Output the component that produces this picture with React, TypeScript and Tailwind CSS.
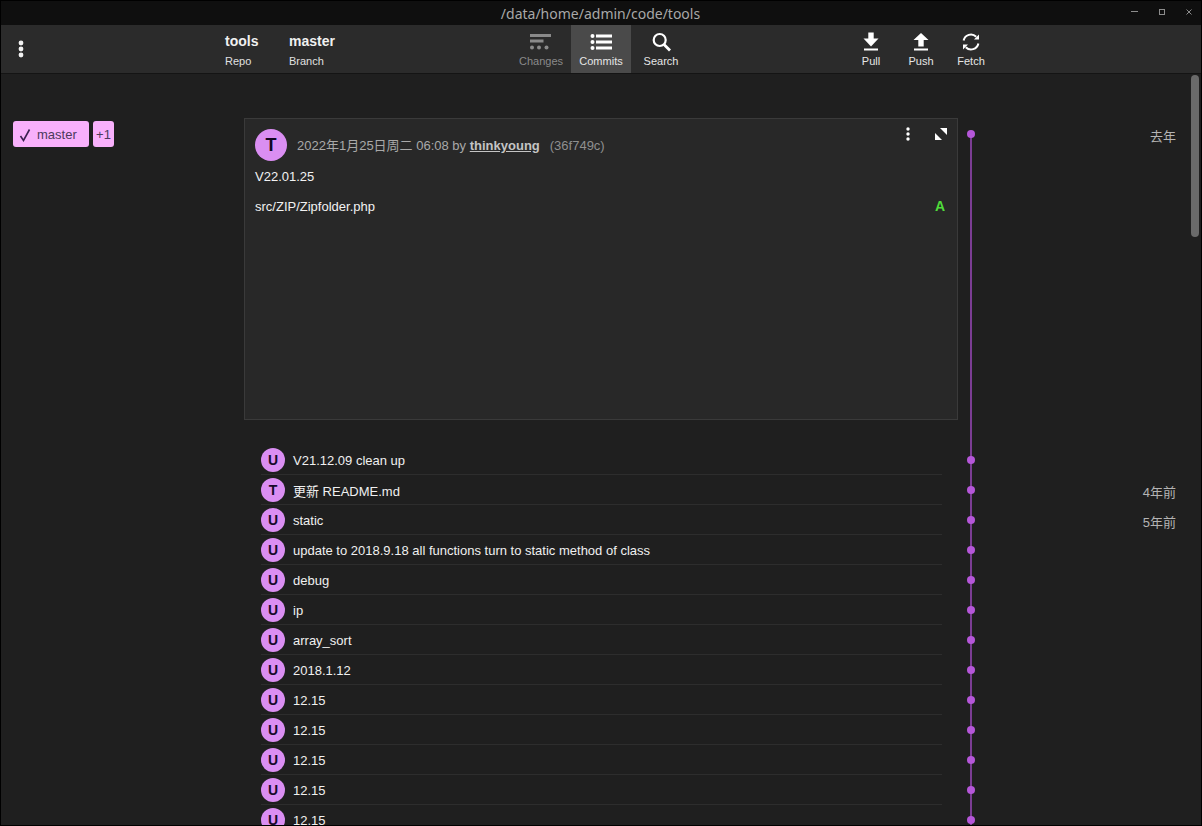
import React from "react";

const font = { fontFamily: '"Liberation Sans", "Noto Sans CJK SC", sans-serif' };

function ToolButton({ label, width, active, dim, children }: { label: string; width: string; active?: boolean; dim?: boolean; children: React.ReactNode }) {
  return (
    <div className={`${width} h-[48px] flex flex-col items-center ${active ? "bg-[#4a4a4a]" : ""}`}>
      <div className="h-[30px] w-full flex items-center justify-center pt-[3px]">{children}</div>
      <div className={`text-[11px] leading-[13px] ${dim ? "text-[#8a8a8a]" : "text-[#e6e6e6]"}`}>{label}</div>
    </div>
  );
}

function GraphCell({ first, label }: { first?: boolean; label?: string }) {
  return (
    <>
      <div className="relative w-[26px] shrink-0 self-stretch">
        <div className={`absolute left-[12px] w-[2px] bg-[#7b3d94] bottom-0 ${first ? "top-[16px]" : "top-0"}`} />
        <div className={`absolute left-[9px] w-[8px] h-[8px] rounded-full bg-[#b557d9] ${first ? "top-[12px]" : "top-[11px]"}`} />
      </div>
      <div className={`flex-1 text-right pr-[25px] text-[13px] text-[#b4b4b4] leading-[16px] ${first ? "pt-[11px]" : "pt-[10px]"}`}>{label}</div>
    </>
  );
}

function Row({ letter, text, label, cjk }: { letter: string; text: string; label?: string; cjk?: boolean }) {
  return (
    <div className="flex h-[30px] shrink-0">
      <div className="w-[260px] shrink-0" />
      <div className="w-[681px] shrink-0 h-[30px] border-b border-[#2d2d2d] pt-[3px]">
        <div className="h-[24px] flex items-center">
          <div className="w-[24px] h-[24px] rounded-full bg-[#da8ef2] text-[#160a2a] font-bold text-[14px] flex items-center justify-center">{letter}</div>
          <div className={`ml-[8px] text-[13px] text-[#f0f0f0] ${cjk ? "pt-[3px]" : "pt-[1px]"}`}>{text}</div>
        </div>
      </div>
      <div className="w-[16px] shrink-0" />
      <GraphCell label={label} />
    </div>
  );
}

const rows: { l: string; t: string; d?: string; c?: boolean }[] = [
  { l: "U", t: "V21.12.09 clean up" },
  { l: "T", t: "更新 README.md", d: "4年前", c: true },
  { l: "U", t: "static", d: "5年前" },
  { l: "U", t: "update to 2018.9.18 all functions turn to static method of class" },
  { l: "U", t: "debug" },
  { l: "U", t: "ip" },
  { l: "U", t: "array_sort" },
  { l: "U", t: "2018.1.12" },
  { l: "U", t: "12.15" },
  { l: "U", t: "12.15" },
  { l: "U", t: "12.15" },
  { l: "U", t: "12.15" },
  { l: "U", t: "12.15" },
];

export default function App() {
  return (
    <div style={font} className="relative w-[1202px] h-[826px] border border-black bg-[#1f1f1f] overflow-hidden flex flex-col">
      <div className="h-[24px] shrink-0 bg-[#0f0f0f] flex items-center justify-center relative">
        <div style={{ fontFamily: '"Noto Sans", sans-serif' }} className="text-[14px] text-[#a8a8a8] leading-[24px] pt-[1px] pr-[1px]">/data/home/admin/code/tools</div>
        <div className="absolute right-0 top-0 h-[24px] flex items-center">
          <svg width="80" height="24" viewBox="0 0 80 24" fill="none" stroke="#8c8c8c" strokeWidth="1">
            <path d="M10 10.5h7" />
            <rect x="38.5" y="8.5" width="5" height="5" />
            <path d="M65.5 8.5l5 5M70.5 8.5l-5 5" />
          </svg>
        </div>
      </div>

      <div className="h-[49px] shrink-0 bg-[#2b2b2b] border-b border-[#141414] flex">
        <div className="w-[40px] flex items-center justify-center">
          <svg width="6" height="18" viewBox="0 0 6 18" fill="#f2f2f2">
            <circle cx="3" cy="3" r="2.4" />
            <circle cx="3" cy="9" r="2.4" />
            <circle cx="3" cy="15" r="2.4" />
          </svg>
        </div>
        <div className="ml-[184px] w-[64px] pt-[8px]">
          <div className="text-[14px] font-bold text-[#f0f0f0] leading-[16px]">tools</div>
          <div className="text-[11px] text-[#e0e0e0] leading-[13px] mt-[6px]">Repo</div>
        </div>
        <div className="w-[222px] pt-[8px]">
          <div className="text-[14px] font-bold text-[#f0f0f0] leading-[16px]">master</div>
          <div className="text-[11px] text-[#e0e0e0] leading-[13px] mt-[6px]">Branch</div>
        </div>
        <ToolButton label="Changes" width="w-[60px]" dim>
          <svg width="24" height="18" viewBox="0 0 24 18" fill="#8a8a8a">
            <rect x="1" y="1" width="21" height="3" />
            <rect x="1" y="6.5" width="13.5" height="3" />
            <circle cx="3" cy="14.5" r="2" />
            <circle cx="10" cy="14.5" r="2" />
            <circle cx="17.5" cy="14.5" r="2" />
          </svg>
        </ToolButton>
        <ToolButton label="Commits" width="w-[60px]" active>
          <svg width="22" height="18" viewBox="0 0 22 18" fill="#ffffff">
            <circle cx="2.5" cy="3" r="2" />
            <circle cx="2.5" cy="9" r="2" />
            <circle cx="2.5" cy="15" r="2" />
            <rect x="6" y="1.5" width="16" height="3" />
            <rect x="6" y="7.5" width="16" height="3" />
            <rect x="6" y="13.5" width="16" height="3" />
          </svg>
        </ToolButton>
        <ToolButton label="Search" width="w-[60px]">
          <svg width="20" height="20" viewBox="0 0 20 20" fill="none" stroke="#ffffff" strokeWidth="2.2">
            <circle cx="8.7" cy="8" r="6" />
            <path d="M13 12.5L19 18.5" strokeWidth="2.8" />
          </svg>
        </ToolButton>
        <div className="w-[155px]" />
        <ToolButton label="Pull" width="w-[50px]">
          <svg width="16" height="19" viewBox="0 0 16 19" fill="#ffffff">
            <path d="M5.3 0.5h5.4v6h4.8L8 14.5.5 6.5h4.8z" />
            <rect x="1" y="16.5" width="14" height="2" />
          </svg>
        </ToolButton>
        <ToolButton label="Push" width="w-[50px]">
          <svg width="16" height="19" viewBox="0 0 16 19" fill="#ffffff">
            <path d="M5.3 14.5h5.4v-6.5h4.8L8 1 .5 8h4.8z" />
            <rect x="1" y="16.5" width="14" height="2" />
          </svg>
        </ToolButton>
        <ToolButton label="Fetch" width="w-[50px]">
          <svg width="20" height="20" viewBox="0 0 20 20" fill="none" stroke="#ffffff" strokeWidth="2">
            <path d="M2.6 8.5a7.5 7.5 0 0 1 12.6-3.8" />
            <path d="M17.4 11.5a7.5 7.5 0 0 1-12.6 3.8" />
            <path d="M18 2.5v5h-5z" fill="#ffffff" stroke="none" />
            <path d="M2 17.5v-5h5z" fill="#ffffff" stroke="none" />
          </svg>
        </ToolButton>
      </div>

      <div className="flex-1 min-h-0 overflow-hidden pt-[44px] flex flex-col">
        <div className="flex h-[327px] shrink-0">
          <div className="w-[243px] shrink-0 pl-[12px] pt-[3px] flex items-start gap-[4px]">
            <div className="w-[76px] h-[26px] rounded-[3px] bg-[#f8b0fb] text-[#4b3a5c] text-[13px] flex items-center pl-[6px] pt-[1px]">
              <svg width="14" height="14" viewBox="0 0 14 14" fill="none" stroke="#3a2050" strokeWidth="1.6"><path d="M1.5 8l3 4.5L10.5 1.5" /></svg>
              <span className="ml-[4px]">master</span>
            </div>
            <div className="w-[21px] h-[26px] rounded-[3px] bg-[#f8b0fb] text-[#4b3a5c] text-[13px] flex items-center justify-center pt-[1px]">+1</div>
          </div>
          <div className="relative w-[714px] h-[302px] shrink-0 bg-[#282828] border border-[#3a3a3a] pl-[10px] pt-[10px]">
            <div className="flex items-center h-[32px]">
              <div className="w-[32px] h-[32px] rounded-full bg-[#da8ef2] text-[#10061f] font-bold text-[18px] flex items-center justify-center">T</div>
              <div className="ml-[10px] text-[13px] text-[#a9a9a9] pt-[1px]">
                2022年1月25日周二 06:08 by <span className="font-bold underline text-[#c4c4c4]">thinkyoung</span>
                <span className="ml-[10px] text-[#8f8f8f]">(36f749c)</span>
              </div>
            </div>
            <div className="text-[13px] text-[#f2f2f2] leading-[16px] mt-[8px]">V22.01.25</div>
            <div className="flex justify-between leading-[16px] mt-[14px] pr-[12px]">
              <div className="text-[13px] text-[#f2f2f2]">src/ZIP/Zipfolder.php</div>
              <div className="text-[14px] font-bold text-[#4fdc3a] -mt-[1px]">A</div>
            </div>
            <div className="absolute left-[661px] top-[8px]">
              <svg width="4" height="14" viewBox="0 0 4 14" fill="#ffffff">
                <circle cx="2" cy="2" r="1.7" />
                <circle cx="2" cy="7" r="1.7" />
                <circle cx="2" cy="12" r="1.7" />
              </svg>
            </div>
            <div className="absolute left-[690px] top-[9px]">
              <svg width="12" height="12" viewBox="0 0 12 12" fill="#ffffff">
                <path d="M5 0h7v7z" />
                <path d="M0 5v7h7z" />
              </svg>
            </div>
          </div>
          <GraphCell first label="去年" />
        </div>
        {rows.map((r, i) => (
          <Row key={i} letter={r.l} text={r.t} label={r.d} cjk={r.c} />
        ))}
      </div>

      <div className="absolute right-[2px] top-[74px] w-[8px] h-[162px] rounded-[4px] bg-[#6a6a6a]" />
    </div>
  );
}
